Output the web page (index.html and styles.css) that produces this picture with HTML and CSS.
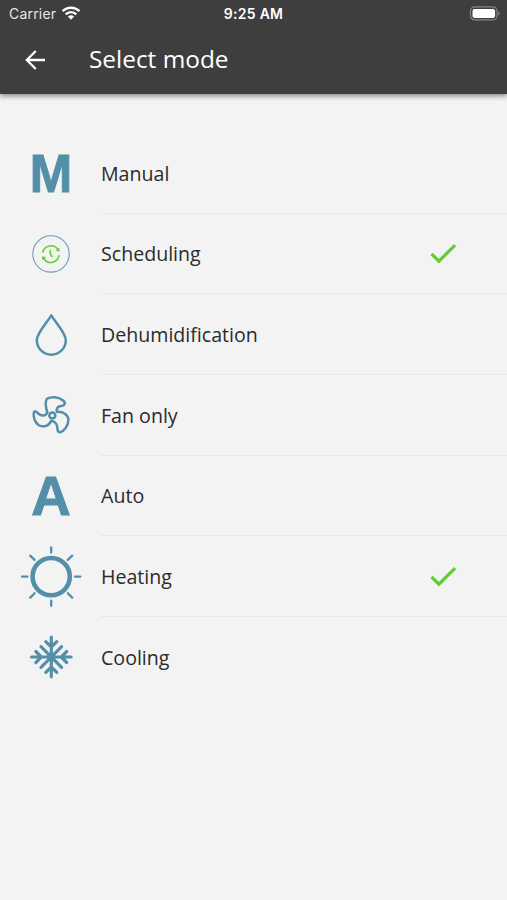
FILE: index.html
```html
<!DOCTYPE html>
<html lang="en">
<head>
<meta charset="utf-8">
<title>Select mode</title>
<link rel="stylesheet" href="styles.css">
</head>
<body>
<header class="header">
  <div class="status">
    <div class="carrier"><span>Carrier</span>
      <svg class="wifi" width="20" height="16" viewBox="0 0 20 16"><path d="M1.6 6.2a11.9 11.9 0 0 1 16.8 0M4.7 9.3a7.5 7.5 0 0 1 10.6 0" fill="none" stroke="#fff" stroke-width="2.4"/><path d="M6.9 11.6a4.5 4.5 0 0 1 6.2 0L10 14.8z" fill="#fff"/></svg>
    </div>
    <div class="time">9:25 AM</div>
    <svg class="battery" width="32" height="16" viewBox="0 0 32 16"><rect x="1.5" y="0.9" width="26.5" height="13" rx="4" fill="none" stroke="#858585" stroke-width="1.2"/><rect x="3.5" y="2.9" width="22.6" height="9" rx="2" fill="#fff"/><path d="M29.3 5.1q3 2.3 0 4.6z" fill="#858585"/></svg>
  </div>
  <div class="toolbar">
    <svg class="back" width="24" height="24" viewBox="0 0 24 24"><path d="M22 12H4M12.8 3L3.8 12l9 9" fill="none" stroke="#fff" stroke-width="2.3"/></svg>
    <h1 class="title">Select mode</h1>
  </div>
</header>
<main class="list">
  <div class="row">
    <svg class="icon" viewBox="0 0 64 64"><text class="letter" x="32.1" y="50.6" font-size="53.5" text-anchor="middle" textLength="42.5" lengthAdjust="spacingAndGlyphs">M</text></svg>
    <div class="item"><span class="label">Manual</span></div>
  </div>
  <div class="row">
    <svg class="icon" viewBox="0 0 64 64"><circle cx="32" cy="31.9" r="18.2" fill="none" stroke="#6f9fb5" stroke-width="1.1"/><g fill="none" stroke="#5fcf3c" stroke-width="1.6"><path d="M23.7 30.6A8.4 8.4 0 0 1 38.8 27.4M40.1 33.2A8.4 8.4 0 0 1 24.8 36.7"/><path d="M31.3 27.7v4.2l2.2 3.2"/></g><path d="M40.4 25.7v4.1l-4-1.2zM23.2 38.3v-4.2l4 1.3z" fill="#5fcf3c"/></svg>
    <div class="item"><span class="label">Scheduling</span><svg class="check" viewBox="0 0 28 24"><path d="M2.5 11.8l7.4 7.4L26.1 3.1" fill="none" stroke="#60cd35" stroke-width="3.2"/></svg></div>
  </div>
  <div class="row">
    <svg class="icon" viewBox="0 0 64 64"><path d="M32.3 12.3C28 19.5 17.8 30 17.8 37.2a14.5 14.5 0 0 0 29 0C46.8 30 36.6 19.5 32.3 12.3z" fill="none" stroke="#538fa8" stroke-width="2.5" stroke-linejoin="round"/></svg>
    <div class="item"><span class="label">Dehumidification</span></div>
  </div>
  <div class="row">
    <svg class="icon" viewBox="0 0 64 64"><g fill="none" stroke="#538fa8" stroke-width="2.5" stroke-linejoin="round"><circle cx="33.3" cy="32.4" r="3"/><path d="M28.3 29.1C26.3 24.3 26.3 18.3 27.8 15.8C32 13.6 39 13.5 43.8 17.3C47.5 20.3 45.5 22.7 42 23.1C38.5 23.6 37 25.8 38 28.9C44 28.3 49 31.8 49.4 36.3C49.8 42.3 45 48.3 41 49.2C38 49.6 38.8 45.8 38 42.8C37.3 39.8 35 38.2 32 38C30 42.8 25 44.6 20 42.3C16 40.1 14 33.8 14.8 29.8C15.2 27.3 17.3 28.5 19.3 30.5C22.5 33.5 27 33.1 28.3 29.1z"/></g></svg>
    <div class="item"><span class="label">Fan only</span></div>
  </div>
  <div class="row">
    <svg class="icon" viewBox="0 0 64 64"><text class="letter" x="32" y="50.8" font-size="55.5" text-anchor="middle" textLength="39.5" lengthAdjust="spacingAndGlyphs">A</text></svg>
    <div class="item"><span class="label">Auto</span></div>
  </div>
  <div class="row">
    <svg class="icon" viewBox="0 0 64 64"><g fill="none" stroke="#538fa8" stroke-linecap="round"><circle cx="32.2" cy="31.6" r="18.6" stroke-width="4.6"/><path stroke-width="2.3" d="M32.2 2.4v5.2M32.2 55.6v5.2M3 31.6h5.5M55.9 31.6h5.5M11.2 10.7l4.4 4.2M53.2 10.7l-4.4 4.2M11.2 52.6l4.4-4.4M53.2 52.6l-4.4-4.4"/></g></svg>
    <div class="item"><span class="label">Heating</span><svg class="check" viewBox="0 0 28 24"><path d="M2.5 11.8l7.4 7.4L26.1 3.1" fill="none" stroke="#60cd35" stroke-width="3.2"/></svg></div>
  </div>
  <div class="row">
    <svg class="icon" viewBox="0 0 64 64"><path d="M32.3 12.2v39.6M12.5 32h39.6M22 21.7l20.6 20.6M42.6 21.7L22 42.3M26.8 16.6l5.5 5.5 5.5-5.5M26.8 47.4l5.5-5.5 5.5 5.5M16.9 26.5l5.5 5.5-5.5 5.5M47.7 26.5l-5.5 5.5 5.5 5.5" fill="none" stroke="#538fa8" stroke-width="3.2" stroke-linecap="round"/></svg>
    <div class="item"><span class="label">Cooling</span></div>
  </div>
</main>
</body>
</html>
```
FILE: styles.css
```css
body {
  margin: 0;
  min-height: 900px;
  background: #f3f3f3;
  font-family: "Open Sans", sans-serif;
  color: #2b2b2b;
}
.header {
  height: 94px;
  background: #3e3e3e;
  color: #fff;
  box-shadow: 0 2px 5px rgba(0, 0, 0, 0.45);
}
.status {
  display: grid;
  grid-template-columns: 1fr auto 1fr;
  align-items: center;
  height: 27px;
  padding: 0 6px 0 9px;
  font-family: Inter, sans-serif;
  font-size: 14px;
}
.carrier {
  display: flex;
  align-items: center;
  gap: 5px;
  color: #e6e6e6;
  letter-spacing: 0.2px;
}
.wifi { margin-top: -2px; }
.time {
  margin-right: 3px;
  font-size: 14px;
  font-weight: 600;
  letter-spacing: 0.3px;
}
.battery { justify-self: end; }
.toolbar {
  display: flex;
  align-items: center;
  height: 65px;
  padding-left: 23px;
}
.title {
  margin: 0 0 2px 42px;
  font-size: 24.4px;
  font-weight: 400;
  line-height: 32px;
}
.list { padding-top: 39px; }
.row {
  display: flex;
  align-items: center;
  height: 80.65px;
  padding-left: 19px;
}
.icon {
  flex: none;
  width: 64px;
  height: 64px;
  margin-right: 18px;
}
.letter {
  font-family: "Liberation Sans", sans-serif;
  font-weight: 700;
  fill: #538fa8;
  stroke: #538fa8;
  stroke-width: 1;
}
.item {
  flex: 1;
  display: flex;
  align-items: center;
  justify-content: space-between;
  box-sizing: border-box;
  height: 100%;
  padding: 2px 50px 0 0;
  border-bottom: 1px solid #e7e7e7;
}
.row:last-child .item { border-bottom-color: transparent; }
.label {
  font-size: 19.6px;
  line-height: 28px;
}
.check {
  width: 28px;
  height: 24px;
}
```
